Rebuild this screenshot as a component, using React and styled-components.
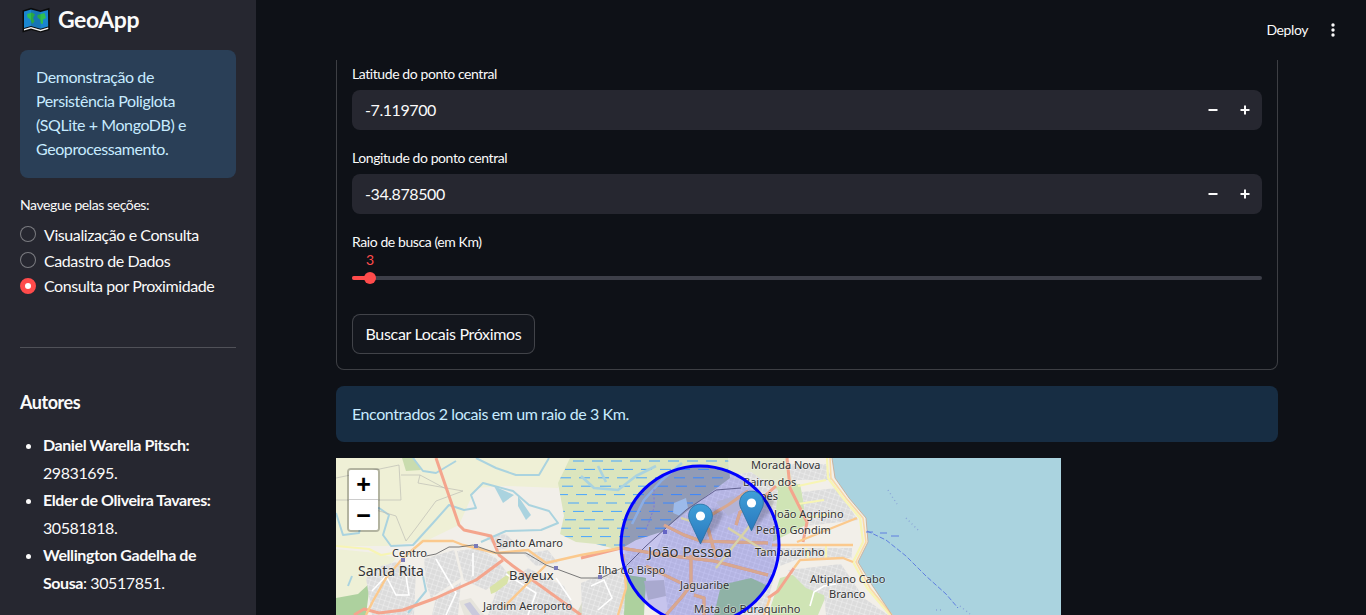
import React from "react";
import styled, { createGlobalStyle } from "styled-components";

const Global = createGlobalStyle`
  html, body { margin: 0; padding: 0; height: 100%; overflow: hidden; background: #0e1117; }
  * { box-sizing: border-box; }
  body { font-family: Lato, "Noto Sans", sans-serif; color: #fafafa; letter-spacing: -0.026em; }
`;

const Page = styled.div`display: flex; width: 1366px; height: 615px; overflow: hidden;`;
const Sidebar = styled.aside`width: 256px; flex: none; background: #262730; padding: 0 20px; height: 615px; overflow: hidden;`;
const Brand = styled.div`display: flex; align-items: center; gap: 8px; height: 40px; padding: 0 0 1px 2px; font-size: 23px; font-weight: 700; line-height: 39px; margin-bottom: 10px; letter-spacing: -0.02em;`;
const Note = styled.div`background: #2a3f57; color: #c7ebff; border-radius: 8px; padding: 15px 16px 0; font-size: 16px; line-height: 24px; height: 128px;`;
const NavLabel = styled.div`font-size: 14px; line-height: 20px; margin-top: 17px; margin-bottom: 6px;`;
const RadioRow = styled.div`display: flex; align-items: center; gap: 8px; height: ${p => p.$h}px; font-size: 16px;`;
const RadioDot = styled.span`
  width: 16px; height: 16px; border-radius: 50%; flex: none;
  border: ${p => (p.$on ? "5px solid #ff4b4b" : "1px solid rgba(250,250,250,.4)")};
  background: ${p => (p.$on ? "#fff" : "#262730")};
`;
const Rule = styled.hr`border: 0; border-top: 1px solid rgba(250,250,250,.2); margin: 49px 0 40px;`;
const AuthorsTitle = styled.h3`font-size: 18px; font-weight: 700; line-height: 28px; margin: 0 0 15px; letter-spacing: -0.025em;`;
const Authors = styled.ul`margin: 0; padding: 0 0 0 23px; font-size: 16px; line-height: 27.5px; li { padding: 0; } b { font-weight: 700; }`;

const Main = styled.main`position: relative; flex: 1; height: 615px; overflow: hidden; background: #0e1117;`;
const Header = styled.header`display: flex; align-items: center; justify-content: flex-end; height: 60px; padding: 0 31px 1px 0; gap: 23px; font-size: 14px; color: #fafafa;`;
const Content = styled.div`width: 942px; margin-left: 80px;`;
const Form = styled.section`
  border: 1px solid rgba(250,250,250,.2); border-top: 0; border-radius: 0 0 8px 8px;
  padding: 4px 15px 15px; height: 310px;
`;
const FieldLabel = styled.div`font-size: 14px; line-height: 20px; height: 26px;`;
const NumberField = styled.div`
  display: flex; align-items: center; height: 40px; border-radius: 8px; background: #262730;
  padding-left: 13px; margin-bottom: 18px; font-size: 16px;
`;
const NumberValue = styled.span`flex: 1; padding-bottom: 2px;`;
const Step = styled.span`width: 32px; height: 40px; display: flex; align-items: center; justify-content: center; color: #fafafa; margin-right: ${p => (p.$last ? 1 : 0)}px;`;
const SliderValue = styled.div`color: #ff4b4b; font-size: 14px; line-height: 16px; height: 16px; margin-left: 14px; margin-top: -6px;`;
const Track = styled.div`position: relative; height: 4px; border-radius: 2px; background: #3d3f49; margin-top: 8px;`;
const TrackFill = styled.div`height: 4px; border-radius: 2px; background: #ff4b4b;`;
const Thumb = styled.span`position: absolute; top: -4px; width: 12px; height: 12px; border-radius: 50%; background: #ff4b4b;`;
const Button = styled.div`
  display: inline-flex; align-items: center; justify-content: center; width: 183px; height: 40px; margin-top: 34px; padding-bottom: 2px;
  border: 1px solid rgba(250,250,250,.2); border-radius: 8px; font-size: 16px; background: #13161d; letter-spacing: -0.02em;
`;
const Info = styled.div`
  display: flex; align-items: center; height: 56px; margin-top: 16px; padding: 0 16px 1px; border-radius: 8px;
  background: #172d43; color: #c7ebff; font-size: 16px;
`;
const MapFrame = styled.div`position: relative; width: 725px; height: 157px; margin-top: 16px; overflow: hidden; background: #f2efe9;`;
const ZoomBox = styled.div`
  position: absolute; left: 11px; top: 10px; width: 33px; border: 2px solid rgba(0,0,0,.25); border-radius: 4px; background-clip: padding-box;
`;
const ZoomBtn = styled.div`
  height: ${p => p.$h}px; background: #fff; color: #000; display: flex; align-items: center; justify-content: center;
  font-family: "Liberation Sans", sans-serif; font-weight: 700; font-size: 25px; letter-spacing: 0;
  border-bottom: ${p => (p.$first ? "1px solid #ccc" : "0")};
  border-radius: ${p => (p.$first ? "2px 2px 0 0" : "0 0 2px 2px")};
`;
const MapSvg = styled.svg`display: block;`;
const MapText = styled.text`font-family: "Noto Sans", sans-serif; fill: #333; font-size: ${p => p.$s || 11}px; letter-spacing: 0; paint-order: stroke; stroke: rgba(255,255,255,.45); stroke-width: 1.4px;`;

const Pin = ({ x, y }) => (
  <g transform={`translate(${x - 12.5},${y - 41})`}>
    <path d="M12.5 41L30 22 36 10 26 4 22 14z" fill="#000" opacity=".18" filter="url(#soft)" />
    <path d="M12.5 0.6C5.8 0.6 0.6 5.9 0.6 12.4c0 2.4.8 4.6 1.9 6.6L12.5 40.4l10-21.4c1.1-2 1.9-4.2 1.9-6.6C24.4 5.9 19.2.6 12.5.6z" fill="url(#pinGrad)" stroke="#2a6f9f" strokeWidth="0.8" />
    <circle cx="12.5" cy="12.5" r="4.6" fill="#fff" />
  </g>
);

const dashes = [];
for (let r = 0; r < 11; r++) {
  for (let c = 0; c < 10; c++) {
    dashes.push(`M${218 + c * 19 + (r % 2) * 8 + (r % 3) * 3} ${3 + r * 8.4}h11`);
  }
}

const wetland = "M222 25L234 0H392L394 20 370 38 345 58 325 74 300 82 283 92 260 86 240 84 224 76 228 58z";
const urban = [
  "M30 120L45 108 60 104 80 112 78 157H36z", "M88 101L118 92 125 120 95 140 90 125z", "M121 93L142 90 160 100 172 116 150 132 128 122z",
  "M100 140L125 124 122 157H96z", "M160 134L192 110 228 128 240 157H152z", "M245 125L262 118 290 112 288 157H246z", "M188 96L212 92 222 105 200 108z",
  "M150 78L170 76 182 88 162 92z",
];
const city = "M328 74L345 58 372 36 392 18 415 14 442 32 436 92 440 112 428 157H332L328 118 286 108 290 92 320 92z";
const eastUrban = [
  "M452 6H490L496 22H456z", "M466 34L500 30 522 62 470 68z", "M442 90H516V100L465 100 444 108z", "M452 112L505 106 528 140 490 138 470 130z", "M488 136L528 140 552 157H490z",
];
const water = [
  "M0 55L7 77 23 75 27 55 43 50 53 57 47 77 55 88 77 87 97 65 113 47 128 52 140 50 135 37 147 25 177 33 193 47 213 53 222 65 205 72 170 73 145 84",
  "M77 0L87 13 100 15 120 3", "M140 0L160 10 180 17 203 17 213 0", "M87 118L90 133 72 155", "M16 118L12 128",
];
const wetWater = ["M245 18L258 30 282 32 300 18 320 8", "M270 24L262 8", "M296 66L308 42 326 22 346 5", "M430 152L395 148 382 157"];
const fields = [
  "M63 7L65 42H0", "M65 17H84L112 32", "M84 17L82 25 127 33 100 43 80 70 70 83 60 58 40 52", "M0 20L63 7",
];
const whites = [
  "M36 133L50 118 60 137 73 137 70 118", "M100 101L120 135 110 157", "M137 95L137 118", "M170 116L200 135 192 157", "M220 120L235 142",
  "M255 128L268 122 276 140 262 152", "M474 148L478 134 488 128 500 126",
];
const salmon = [
  "M100 0L123 67 128 72 155 78 163 97 177 108 245 157",
  "M18 157L28 151 43 155 67 152 100 140 140 122 167 102",
  "M245 100L285 90 328 97 378 103 432 117",
  "M328 67L348 77 365 83 432 85",
  "M375 57L392 47 412 33",
  "M400 67L404 54 420 46 440 28",
  "M355 97L355 127 345 140 330 157",
  "M358 137L368 140 368 157",
  "M451 0L454 30 471 64 467 84",
  "M432 140L442 133 458 110",
  "M310 108L345 125",
  "M372 70L380 100",
];
const orange = [
  "M30 157L37 143 50 120 67 100 87 83 117 83 127 87 160 95 192 92 210 105 245 97 285 90",
  "M167 150L210 107",
  "M436 87H517", "M461 84L521 60", "M458 110L464 102 507 100 517 104",
  "M287 96L290 130 282 157", "M428 157L434 140",
];
const yellow = [
  "M0 88L33 91 45 97 57 95", "M491 0L492 20 507 40 524 60 527 84 517 104 531 130 554 157", "M490 22L462 28", "M488 42L462 46", "M500 55L470 60",
  "M470 90L472 100", "M490 87V100", "M380 110L420 60", "M392 70L432 95", "M345 60L370 68",
];
const orangeCoast = "M494 0L495 20 510 40 527 60 530 84 520 104 534 130 556 157";
const rail = "M90 98L100 96 113 89 123 89 137 87 160 95 190 95 210 107 245 120 265 120 290 108 310 88 330 70 350 52 380 32 405 30";
const labels = [
  ["Morada Nova", 415, 11, 11], ["Bairro dos", 407, 28, 11], ["Ipês", 420, 42, 11], ["João Agripino", 438, 60, 11],
  ["Pedro Gondim", 420, 76, 11], ["Tambauzinho", 419, 98, 11], ["Altiplano Cabo", 474, 125, 11], ["Branco", 493, 140, 11],
  ["Mata do Buraquinho", 358, 155, 11], ["Jaguaribe", 344, 131, 11], ["João Pessoa", 312, 99, 15],
  ["Santo Amaro", 160, 89, 11], ["Centro", 56, 99, 11], ["Santa Rita", 22, 118, 14], ["Bayeux", 173, 122, 13],
  ["Ilha do Bispo", 262, 116, 11], ["Jardim Aeroporto", 147, 152, 11],
];
const stations = [[67, 102], [140, 88], [220, 110], [264, 119], [329, 74]];

const MapArt = () => (
  <MapSvg width="725" height="157" viewBox="0 0 725 157">
    <defs>
      <linearGradient id="pinGrad" x1="0" y1="0" x2="0" y2="1">
        <stop offset="0" stopColor="#3f9fd8" />
        <stop offset="1" stopColor="#2a78bd" />
      </linearGradient>
      <filter id="soft"><feGaussianBlur stdDeviation="1.5" /></filter>
      <pattern id="urb" width="5" height="5" patternUnits="userSpaceOnUse" patternTransform="rotate(18)">
        <rect width="5" height="5" fill="#dcdcdc" />
        <path d="M0 0H5M0 0V5" stroke="#f8f8f8" strokeWidth=".7" />
      </pattern>
      <clipPath id="wet"><path d={wetland} /></clipPath>
      <clipPath id="disc"><circle cx="364" cy="87" r="79" /></clipPath>
    </defs>
    <rect width="725" height="157" fill="#f2efe9" />
    <path d="M0 0H100L123 67 90 83 50 88 0 88z" fill="#eff0d6" />
    <path d="M100 0H240L222 30 170 28 140 30 135 40 123 67z" fill="#eff0d6" />
    <path d="M0 91L40 95 60 100 40 125 20 140H0z" fill="#eef0d6" />
    <path d="M0 140L22 136 34 125 30 157H0z" fill="#add19e" />
    <path d="M165 130L178 126 182 138 168 142z" fill="#add19e" />
    <path d="M152 122L175 112 170 130 155 136z" fill="#d9e3a8" />
    <path d="M66 0H78L85 12 70 13z" fill="#c9dcae" />
    <path d="M290 117L310 120 308 157H280z" fill="#add19e" />
    <path d="M240 157L250 136 280 130 285 157z" fill="#d8dbc8" />
    <path d="M123 143L135 140 148 157H128z" fill="#e6e4dc" />
    <path d="M128 146L134 144 144 157H136z" fill="#c9c9dc" />
    <path d="M392 0H450L462 28 430 30 415 14 394 18z" fill="#e5e9cf" />
    <path d="M430 30L464 26 472 66 436 84z" fill="#cfe4b5" />
    <path d="M444 120L475 112 490 138 482 157H432z" fill="#cfe4b5" />
    {urban.map((d, i) => <path key={i} d={d} fill="url(#urb)" />)}
    {eastUrban.map((d, i) => <path key={i} d={d} fill="url(#urb)" />)}
    <path d={city} fill="url(#urb)" />
    <path d={wetland} fill="#dbe5be" />
    <g clipPath="url(#disc)"><path d={wetland} fill="#8e9c92" opacity=".55" /></g>
    <g clipPath="url(#wet)"><path d={dashes.join("")} stroke="#47a5ff" strokeWidth="1" fill="none" /></g>
    <path d="M338 45L350 40 352 50 344 58 337 55z" fill="#bfe3e6" />
    {water.map((d, i) => <path key={i} d={d} fill="none" stroke="#aad3df" strokeWidth="2" strokeLinejoin="round" />)}
    {wetWater.map((d, i) => <path key={i} d={d} fill="none" stroke="#aad3df" strokeWidth="2.6" strokeLinejoin="round" />)}
    <path d="M158 28L178 37 167 45z" fill="#aad3df" />
    <path d="M182 38L195 57 190 62 182 48z" fill="#aad3df" />
    <path d="M310 72L318 50 318 30" stroke="#9a8fd0" strokeWidth="1" strokeDasharray="2 2" fill="none" />
    <path d={fields.join("")} stroke="#bdbdb4" strokeWidth=".7" fill="none" />
    {whites.map((d, i) => <path key={i} d={d} stroke="#fff" strokeWidth="1.6" fill="none" />)}
    {yellow.map((d, i) => <path key={i} d={d} stroke="#f7f5b4" strokeWidth="2.2" fill="none" strokeLinejoin="round" />)}
    {salmon.map((d, i) => <path key={i} d={d} stroke="#f4a58d" strokeWidth="3" fill="none" strokeLinejoin="round" />)}
    {orange.map((d, i) => <path key={i} d={d} stroke="#fbc98d" strokeWidth="2.4" fill="none" strokeLinejoin="round" />)}
    <path d={rail} stroke="#777" strokeWidth="1" fill="none" />
    {stations.map(([x, y], i) => <rect key={i} x={x - 2} y={y - 2} width="4" height="4" fill="#7a7ab8" />)}
    <path d="M496 0L499 20 513 40 530 60 532 84 522 104 536 127 556 157H725V0z" fill="#aad3df" />
    <path d={orangeCoast} fill="none" stroke="#fbd9a6" strokeWidth="1.6" />
    <path d="M496 0L499 20 513 40 530 60 532 84 522 104 536 127 556 157" fill="none" stroke="#c9a88f" strokeWidth=".8" />
    <path d="M531 73L550 82 570 98 590 118 610 136 622 150" fill="none" stroke="#5f7fe0" strokeWidth="1" strokeDasharray="5 2" />
    <path d="M530 74h7M544 75h7M555 78h8" stroke="#5f7fe0" strokeWidth="1" />
    <path d="M552 32l5 8 4 6M570 60l6 6 6 6M624 148l10 8M600 152h6" stroke="#8aa5d8" strokeWidth="1.4" strokeDasharray="1 3" fill="none" />
    <circle cx="364" cy="87" r="79" fill="#0000ff" fillOpacity=".18" />
    <g clipPath="url(#disc)">
      <path d="M385 127L415 120 432 128 425 157H378z" fill="#8fb2a6" />
      <path d="M290 117L310 120 308 157H280z" fill="#8fb2a6" />
      <path d="M308 123L328 122 330 138 312 142z" fill="#a9a9cf" />
      <path d="M380 44L398 38 410 48 392 58z" fill="#b3b3d6" />
      {salmon.map((d, i) => <path key={i} d={d} stroke="#d8a88f" strokeWidth="3" fill="none" strokeLinejoin="round" />)}
      {orange.map((d, i) => <path key={i} d={d} stroke="#d8a88f" strokeWidth="2.4" fill="none" strokeLinejoin="round" />)}
      <path d="M380 110L420 60M392 70L432 95M345 60L370 68" stroke="#d8d2a8" strokeWidth="2.2" fill="none" />
    </g>
    {labels.map(([t, x, y, s]) => <MapText key={t} x={x} y={y} $s={s}>{t}</MapText>)}
    <circle cx="364" cy="87" r="79" fill="none" stroke="#0000ff" strokeWidth="3" />
    <Pin x={364.5} y={86.5} />
    <Pin x={415.5} y={73.5} />
  </MapSvg>
);

const Logo = () => (
  <svg width="28" height="26" viewBox="0 0 28 26">
    <path d="M0.5 3.5L9 .8l9.5 2.7L27.500 .8 27.800 23l-9 2.600-9.500-2.700-8.800 2.600z" fill="#0b0b0b" />
    <path d="M2 4.500L9 2.400l9.500 2.700 7.500-2.200.2 16.500-7.700 2.300L9 19l-7 2z" fill="#1a86cf" />
    <path d="M5 7l5-1.500 3 2-2 3.500 1.500 3.500-2.500 2.500-1.500-4.500-3-2zM15.500 8l7-2 1.500 5-3 1.500 0 4-2 .5-1-4.500-2.500-2z" fill="#2fbf4f" />
    <path d="M9 2.400v16.600l9.500 2.700V5.100z" fill="#000" opacity=".12" />
    <path d="M2 22l7-2 9.500 2.700 7.700-2.300.1 1.500-7.800 2.300L9 21.500l-7 2z" fill="#f0f0f0" />
  </svg>
);

const Minus = () => <svg width="10" height="10" viewBox="0 0 10 10"><path d="M.5 5h9" stroke="#fafafa" strokeWidth="2" /></svg>;
const Plus = () => <svg width="10" height="10" viewBox="0 0 10 10"><path d="M.5 5h9M5 .5v9" stroke="#fafafa" strokeWidth="2" /></svg>;
const Kebab = () => <svg width="4" height="14" viewBox="0 0 4 14"><circle cx="2" cy="2" r="1.7" fill="#fafafa" /><circle cx="2" cy="7" r="1.7" fill="#fafafa" /><circle cx="2" cy="12" r="1.7" fill="#fafafa" /></svg>;

const NumberInput = ({ value }) => (
  <NumberField>
    <NumberValue>{value}</NumberValue>
    <Step><Minus /></Step>
    <Step $last><Plus /></Step>
  </NumberField>
);

export default function App() {
  return (
    <Page>
      <Global />
      <Sidebar>
        <Brand><Logo />GeoApp</Brand>
        <Note>Demonstração de Persistência Poliglota (SQLite + MongoDB) e Geoprocessamento.</Note>
        <NavLabel>Navegue pelas seções:</NavLabel>
        <RadioRow $h={26}><RadioDot />Visualização e Consulta</RadioRow>
        <RadioRow $h={26}><RadioDot />Cadastro de Dados</RadioRow>
        <RadioRow $h={25}><RadioDot $on />Consulta por Proximidade</RadioRow>
        <Rule />
        <AuthorsTitle>Autores</AuthorsTitle>
        <Authors>
          <li><b>Daniel Warella Pitsch:</b> 29831695.</li>
          <li><b>Elder de Oliveira Tavares:</b> 30581818.</li>
          <li><b>Wellington Gadelha de Sousa</b>: 30517851.</li>
        </Authors>
      </Sidebar>
      <Main>
        <Header>Deploy<Kebab /></Header>
        <Content>
          <Form>
            <FieldLabel>Latitude do ponto central</FieldLabel>
            <NumberInput value="-7.119700" />
            <FieldLabel>Longitude do ponto central</FieldLabel>
            <NumberInput value="-34.878500" />
            <FieldLabel>Raio de busca (em Km)</FieldLabel>
            <SliderValue>3</SliderValue>
            <Track>
              <TrackFill style={{ width: 18 }} />
              <Thumb style={{ left: 12 }} />
            </Track>
            <Button>Buscar Locais Próximos</Button>
          </Form>
          <Info>Encontrados 2 locais em um raio de 3 Km.</Info>
          <MapFrame>
            <MapArt />
            <ZoomBox>
              <ZoomBtn $first $h={30}>+</ZoomBtn>
              <ZoomBtn $h={30}>−</ZoomBtn>
            </ZoomBox>
          </MapFrame>
        </Content>
      </Main>
    </Page>
  );
}
